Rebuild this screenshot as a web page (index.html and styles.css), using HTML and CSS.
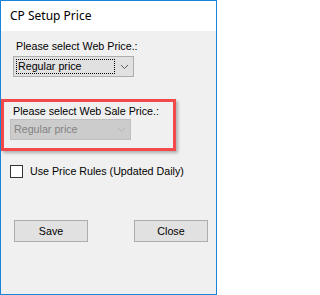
FILE: index.html
```html
<!DOCTYPE html>
<html>
<head>
<meta charset="utf-8">
<link rel="stylesheet" href="styles.css">
</head>
<body>
<div class="window">
  <div class="titlebar">CP Setup Price</div>
  <div class="content">
    <div class="label label-web">Please select Web Price.:</div>
    <div class="combo combo-web">
      <div class="combo-focus">Regular price</div>
      <svg class="chevron" width="9" height="6" viewBox="0 0 9 6"><polyline points="1,1 4.5,4.5 8,1" fill="none" stroke="#5a5a5a" stroke-width="1"/></svg>
    </div>
    <div class="highlight">
      <div class="label label-sale">Please select Web Sale Price.:</div>
      <div class="combo combo-disabled">
        <div class="combo-text">Regular price</div>
        <svg class="chevron" width="9" height="6" viewBox="0 0 9 6"><polyline points="1,1 4.5,4.5 8,1" fill="none" stroke="#b4b4b4" stroke-width="1"/></svg>
      </div>
    </div>
    <label class="check-row">
      <span class="checkbox"></span>
      <span class="check-label">Use Price Rules (Updated Daily)</span>
    </label>
    <div class="buttons">
      <div class="button">Save</div>
      <div class="button">Close</div>
    </div>
  </div>
</div>
</body>
</html>
```
FILE: styles.css
```css
html, body {
  margin: 0;
  padding: 0;
  background: #ffffff;
}
.window {
  width: 217px;
  height: 295px;
  box-sizing: border-box;
  border: 1px solid #1883d7;
  background: #f0f0f0;
  display: flex;
  flex-direction: column;
  font-family: "Liberation Sans", Arial, sans-serif;
  font-size: 10.7px;
  color: #000;
}
.titlebar {
  height: 30px;
  line-height: 30px;
  background: #ffffff;
  padding-left: 9px;
  font-family: "Noto Sans", "Open Sans", sans-serif;
  font-size: 12px;
  color: #000;
  flex: none;
}
.content {
  flex: 1;
  display: flex;
  flex-direction: column;
  align-items: flex-start;
}
.label {
  line-height: 13px;
  white-space: nowrap;
}
.label-web {
  margin: 9px 0 0 15px;
}
.combo {
  box-sizing: border-box;
  width: 121px;
  height: 21px;
  border: 1px solid #adadad;
  background: #e1e1e1;
  display: flex;
  align-items: center;
}
.combo-web {
  margin: 3px 0 0 12px;
}
.combo-focus {
  box-sizing: border-box;
  margin-left: 2px;
  width: 99px;
  height: 15px;
  border: 1px dotted #000;
  line-height: 13px;
  padding-left: 1px;
  white-space: nowrap;
}
.combo-text {
  margin-left: 3px;
  width: 98px;
  line-height: 13px;
  white-space: nowrap;
  color: #838383;
}
.chevron {
  margin-left: 5px;
  margin-top: 1px;
}
.highlight {
  box-sizing: border-box;
  width: 175px;
  height: 52px;
  margin-top: 22px;
  border: 3px solid #f24a4a;
  box-shadow: 2px 2px 3px rgba(0, 0, 0, 0.28);
  display: flex;
  flex-direction: column;
  align-items: flex-start;
}
.label-sale {
  margin: 3px 0 0 9px;
}
.combo-disabled {
  margin: 1px 0 0 6px;
  background: #cccccc;
  border-color: #bfbfbf;
}
.check-row {
  display: flex;
  align-items: center;
  margin: 14px 0 0 9px;
}
.checkbox {
  box-sizing: border-box;
  width: 13px;
  height: 13px;
  border: 1px solid #333333;
  background: #ffffff;
}
.check-label {
  margin-left: 7px;
  line-height: 13px;
  white-space: nowrap;
}
.buttons {
  display: flex;
  margin: 42px 0 0 13px;
  gap: 46px;
}
.button {
  box-sizing: border-box;
  width: 74px;
  height: 22px;
  border: 1px solid #adadad;
  background: #e1e1e1;
  display: flex;
  align-items: center;
  justify-content: center;
}
```
